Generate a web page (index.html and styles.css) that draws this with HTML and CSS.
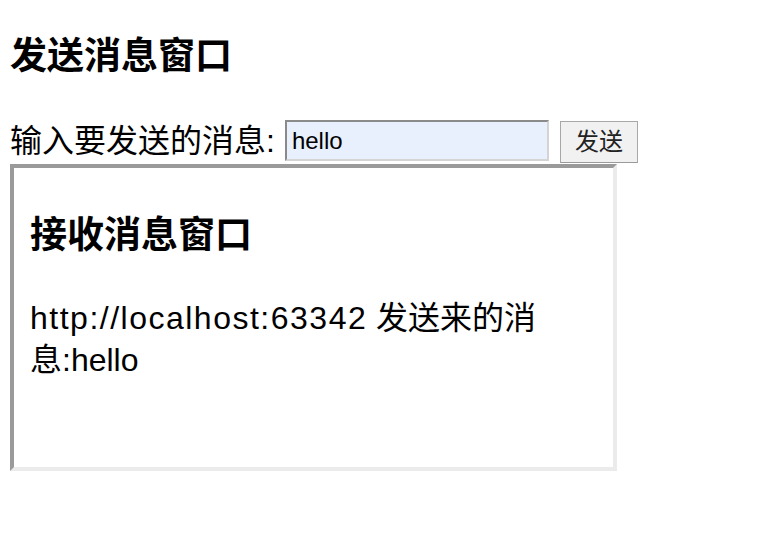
FILE: index.html
```html
<!DOCTYPE html>
<html lang="zh">
<head>
<meta charset="utf-8">
<title>发送消息窗口</title>
<link rel="stylesheet" href="styles.css">
</head>
<body>
<h3 class="title">发送消息窗口</h3>
<div class="send-row">
  <label class="label" for="msg">输入要发送的消息:</label>
  <input class="msg-input" id="msg" type="text" value="hello">
  <button class="send-btn" type="button">发送</button>
</div>
<div class="frame">
  <h3 class="frame-title">接收消息窗口</h3>
  <p class="frame-text"><span class="origin">http://localhost:63342</span> 发送来的消息:hello</p>
</div>
</body>
</html>
```
FILE: styles.css
```css
html, body {
  margin: 0;
  padding: 0;
  background: #ffffff;
}
body {
  padding-left: 10px;
  font-family: "Liberation Sans", "Noto Sans CJK SC", sans-serif;
  color: #000;
}
.title {
  margin: 37px 0 0;
  font-size: 37px;
  line-height: 40px;
  font-weight: bold;
}
.send-row {
  display: flex;
  align-items: flex-start;
  margin-top: 43px;
  height: 43px;
}
.label {
  font-size: 32px;
  line-height: 43px;
  margin-right: 10px;
}
.msg-input {
  box-sizing: border-box;
  width: 264px;
  height: 41px;
  margin: 0;
  padding: 0 5px;
  border: 2px solid;
  border-color: #8a8a8a #d4d4d4 #d4d4d4 #8a8a8a;
  background: #e8f0fe;
  font-family: "Liberation Sans", sans-serif;
  font-size: 24px;
  color: #000;
  outline: none;
}
.send-btn {
  box-sizing: border-box;
  width: 78px;
  height: 42px;
  margin: 1px 0 0 11px;
  padding: 0 0 5px;
  border: 1px solid #a8a8a8;
  border-bottom-color: #9a9a9a;
  background: #f1f1f1;
  font-family: "Noto Sans CJK SC", sans-serif;
  font-size: 24px;
  line-height: 30px;
  color: #222;
}
.frame {
  box-sizing: border-box;
  width: 607px;
  height: 307px;
  margin-top: 1px;
  padding: 0 16px;
  border: 4px solid;
  border-color: #9a9a9a #ebebeb #ebebeb #9a9a9a;
}
.frame-title {
  margin: 48px 0 0;
  font-size: 37px;
  line-height: 40px;
  font-weight: bold;
}
.frame-text {
  margin: 41px 0 0;
  font-size: 32px;
  line-height: 42px;
}
.origin {
  letter-spacing: 1.5px;
}
```
